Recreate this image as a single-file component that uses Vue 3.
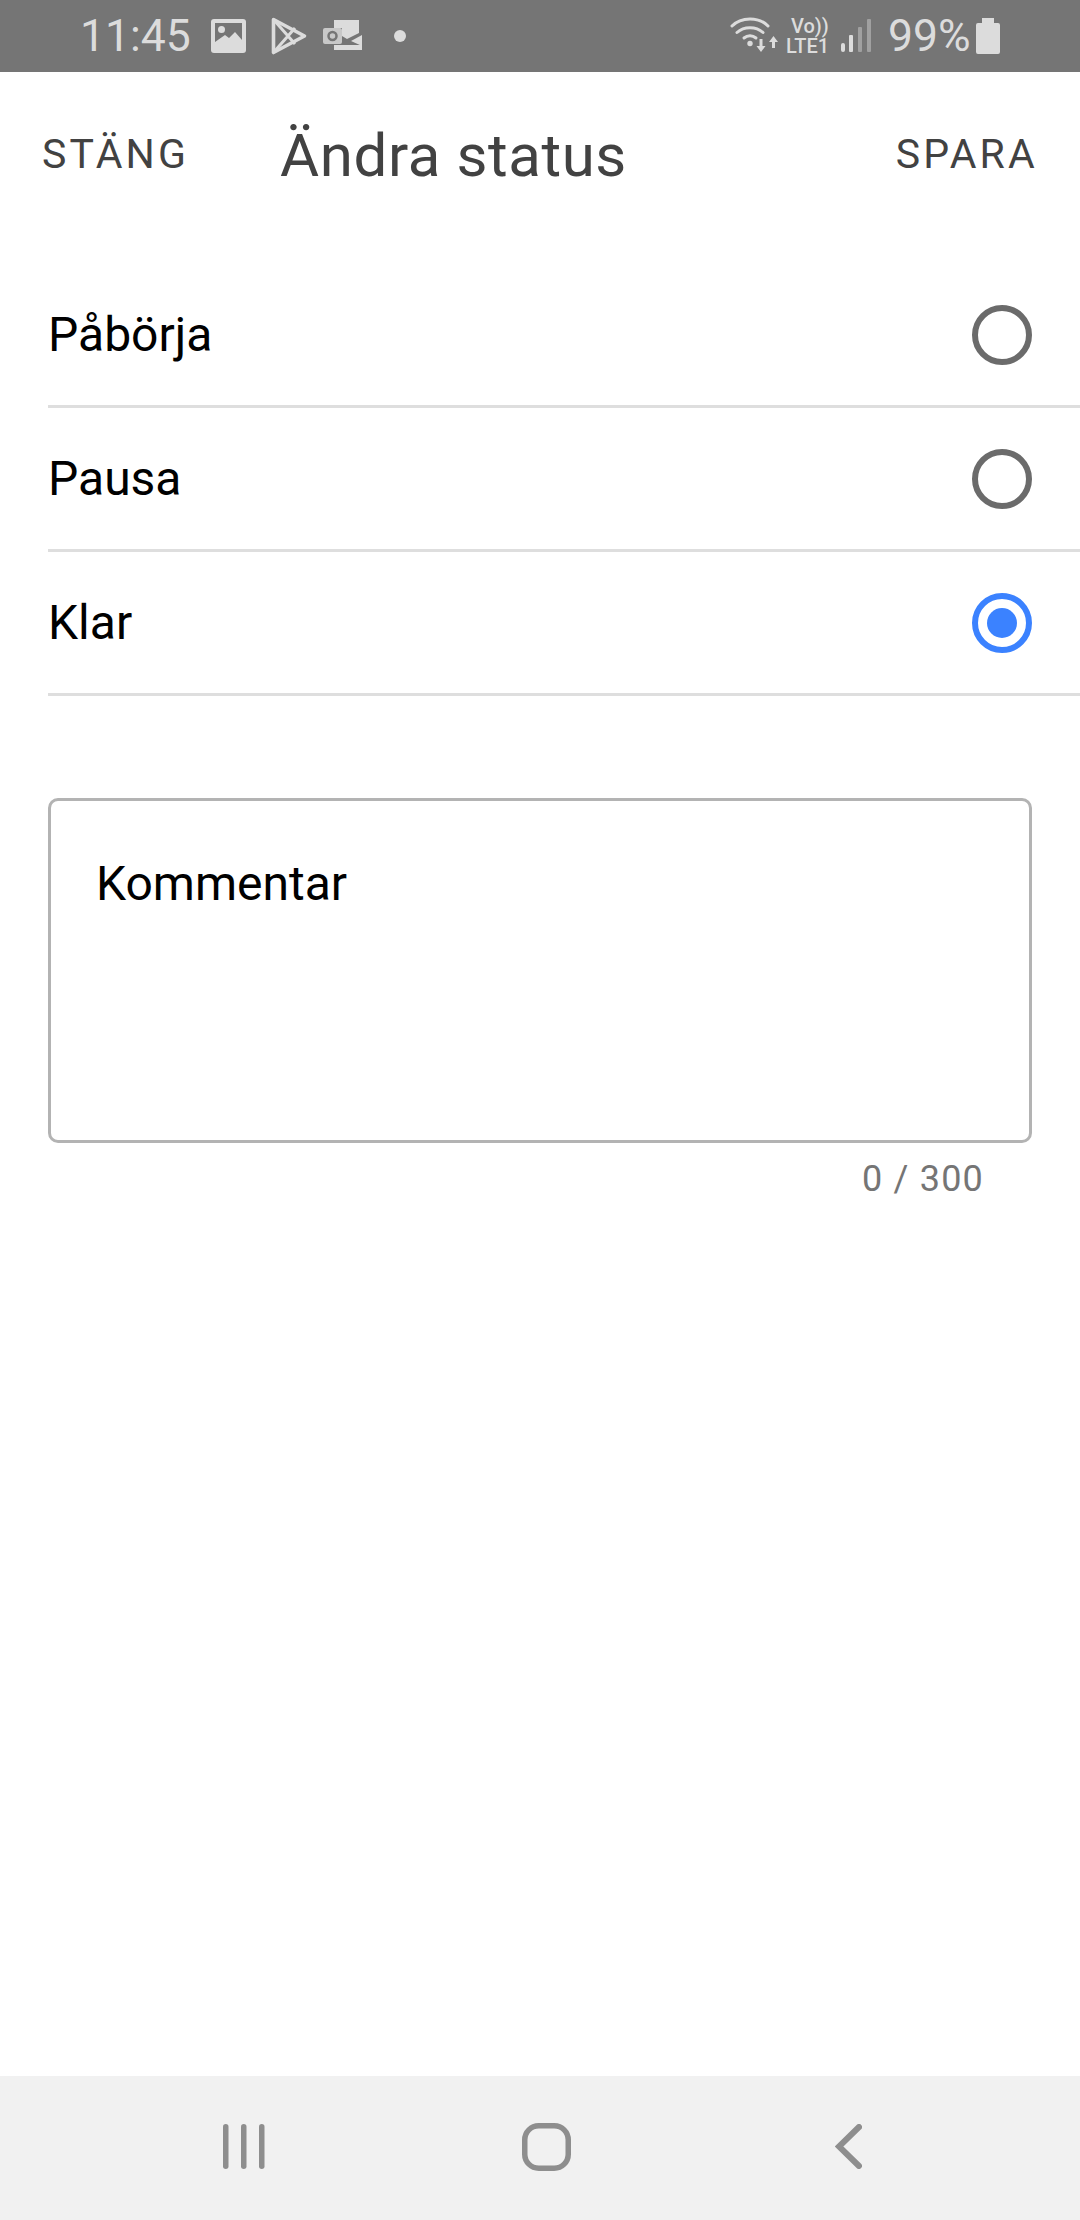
<template>
  <div class="screen">
    <div class="status-bar">
      <div class="status-left">
        <span class="time">11:45</span>
        <svg class="ic-image" width="35" height="34" viewBox="0 0 35 34">
          <rect x="0" y="0" width="35" height="34" rx="3" fill="#dcdcdc" />
          <path fill="#757575" d="M4 4h27v17l-7-8-6 6-4-3-10 7z" />
          <circle cx="10.500" cy="10.500" r="3.500" fill="#dcdcdc" />
        </svg>
        <svg class="ic-play" width="36" height="38" viewBox="0 0 36 38">
          <path fill="none" stroke="#dcdcdc" stroke-width="3.600" stroke-linejoin="round" d="M2.500 2.500 33.500 19 2.500 35.500z" />
          <path fill="none" stroke="#dcdcdc" stroke-width="3" d="M2.500 2.500 24 27M2.500 35.500 24 11" />
        </svg>
        <svg class="ic-outlook" width="39" height="31" viewBox="0 0 39 31">
          <path fill="#dcdcdc" d="M11 0h25v13l-12 6-5-3V8h-8z" />
          <path fill="#dcdcdc" d="M28 21l11-6v11z" />
          <path fill="#dcdcdc" d="M11 25h28v5H11z" />
          <rect x="0" y="8" width="19" height="16" rx="2" fill="#c8c8c8" />
          <circle cx="9.500" cy="16" r="4" fill="none" stroke="#757575" stroke-width="2.500" />
        </svg>
        <span class="dot"></span>
      </div>
      <div class="status-right">
        <svg class="ic-wifi" width="48" height="38" viewBox="0 0 48 38">
          <g fill="none" stroke="#dcdcdc" stroke-width="3" stroke-linecap="round">
            <path d="M2 9C11-.5 29-.5 38 9" />
            <path d="M7 15.500c7-6.500 19-6.500 26 0" />
            <path d="M14 21c3.500-3 8.500-3 12 0" />
          </g>
          <circle cx="20" cy="26.500" r="2.700" fill="#dcdcdc" />
          <path fill="#dcdcdc" d="M29.500 22h3v7h3l-4.500 6-4.500-6h3zM42 31v-6h-3l4.500-6 4.500 6h-3v6z" />
        </svg>
        <div class="network">
          <span class="volte">Vo))</span>
          <span class="lte">LTE1</span>
        </div>
        <svg class="ic-signal" width="30" height="33" viewBox="0 0 30 33">
          <rect x="0" y="24" width="4" height="9" rx="2" fill="#dcdcdc" />
          <rect x="8" y="16" width="4" height="17" rx="1" fill="#dcdcdc" />
          <rect x="17" y="8" width="4" height="25" rx="1" fill="#a0a0a0" />
          <rect x="26" y="0" width="4" height="33" rx="1" fill="#a0a0a0" />
        </svg>
        <span class="battery-text">99%</span>
        <svg class="ic-battery" width="24" height="36" viewBox="0 0 24 36">
          <path fill="#dcdcdc" d="M6 0h12v5h4a2 2 0 0 1 2 2v27a2 2 0 0 1-2 2H2a2 2 0 0 1-2-2V7a2 2 0 0 1 2-2h4z" />
        </svg>
      </div>
    </div>

    <div class="toolbar">
      <span class="action">STÄNG</span>
      <span class="title">Ändra status</span>
      <span class="action save">SPARA</span>
    </div>

    <ul class="options">
      <li v-for="opt in options" :key="opt" class="option">
        <span class="option-label">{{ opt }}</span>
        <span class="radio" :class="{ checked: opt === selected }"></span>
      </li>
    </ul>

    <div class="comment-box">
      <span class="placeholder">Kommentar</span>
    </div>
    <div class="counter">0 / 300</div>

    <div class="spacer"></div>

    <div class="nav-bar">
      <svg width="42" height="45" viewBox="0 0 42 45">
        <g fill="#8e8e8e">
          <rect x="0" y="0" width="5.500" height="45" rx="2.750" />
          <rect x="18" y="0" width="5.500" height="45" rx="2.750" />
          <rect x="36" y="0" width="5.500" height="45" rx="2.750" />
        </g>
      </svg>
      <svg class="nav-home" width="49" height="48" viewBox="0 0 49 48">
        <rect x="2.750" y="2.750" width="43.500" height="42.500" rx="14" fill="none" stroke="#8e8e8e" stroke-width="5.500" />
      </svg>
      <svg class="nav-back" width="27" height="45" viewBox="0 0 27 45">
        <path fill="none" stroke="#8e8e8e" stroke-width="6" stroke-linecap="round" stroke-linejoin="miter" d="M24 3 4 22.500 24 42" />
      </svg>
    </div>
  </div>
</template>

<script setup>
const options = ['Påbörja', 'Pausa', 'Klar']
const selected = 'Klar'
</script>

<style>
html,
body {
  margin: 0;
  background: #fff;
}
</style>

<style scoped>
.screen {
  width: 1080px;
  height: 2220px;
  display: flex;
  flex-direction: column;
  background: #fff;
  font-family: Roboto, "Liberation Sans", sans-serif;
  overflow: hidden;
}

.status-bar {
  box-sizing: border-box;
  height: 72px;
  flex: none;
  background: #757575;
  color: #dcdcdc;
  display: flex;
  align-items: center;
  justify-content: space-between;
  padding: 0 80px 1px 80px;
}
.status-left,
.status-right {
  display: flex;
  align-items: center;
}
.time {
  font-size: 44.5px;
  line-height: 72px;
  width: 131px;
}
.ic-play {
  margin-left: 25px;
}
.ic-outlook {
  margin-left: 16px;
}
.dot {
  width: 12px;
  height: 12px;
  border-radius: 50%;
  background: #dcdcdc;
  margin-left: 32px;
}
.network {
  width: 44px;
  margin-left: 8px;
  display: flex;
  flex-direction: column;
  align-items: flex-start;
  font-weight: 500;
  font-size: 20px;
  line-height: 20px;
  white-space: nowrap;
}
.volte {
  margin-left: 5px;
}
.ic-signal {
  margin-left: 11px;
}
.battery-text {
  font-size: 44.5px;
  line-height: 72px;
  width: 88px;
  margin-left: 17px;
}

.toolbar {
  height: 168px;
  flex: none;
  display: flex;
  align-items: center;
  padding: 0 42px;
  color: #424242;
}
.action {
  font-size: 41px;
  letter-spacing: 3.2px;
  width: 238px;
  margin-bottom: 4px;
}
.title {
  font-size: 60px;
  letter-spacing: 0.6px;
  flex: 1;
  line-height: 118px;
}
.save {
  width: auto;
}

.options {
  list-style: none;
  margin: 24px 0 0;
  padding: 0 0 0 48px;
}
.option {
  height: 141px;
  border-bottom: 3px solid #dedede;
  display: flex;
  align-items: center;
  justify-content: space-between;
  padding-right: 48px;
}
.option-label {
  font-size: 48px;
  color: #000;
}
.radio {
  width: 60px;
  height: 60px;
  box-sizing: border-box;
  border: 6px solid #6b6b6b;
  border-radius: 50%;
  display: flex;
  align-items: center;
  justify-content: center;
}
.radio.checked {
  border-color: #3b82ff;
}
.radio.checked::after {
  content: "";
  width: 30px;
  height: 30px;
  border-radius: 50%;
  background: #3b82ff;
}

.comment-box {
  box-sizing: border-box;
  width: 984px;
  height: 345px;
  margin: 102px 0 0 48px;
  padding: 55px 45px 0;
  border: 3px solid #b3b3b3;
  border-radius: 10px;
}
.placeholder {
  display: block;
  font-size: 48px;
  line-height: 56px;
  color: #000;
}
.counter {
  margin: 15px 96px 0 0;
  text-align: right;
  font-size: 36px;
  line-height: 42px;
  letter-spacing: 1.2px;
  color: #757575;
}

.spacer {
  flex: 1;
}

.nav-bar {
  box-sizing: border-box;
  height: 144px;
  flex: none;
  background: #f1f1f1;
  display: flex;
  align-items: center;
  padding: 0 0 3px 223px;
}
.nav-home {
  margin-left: 257px;
}
.nav-back {
  margin-left: 264px;
}
</style>
